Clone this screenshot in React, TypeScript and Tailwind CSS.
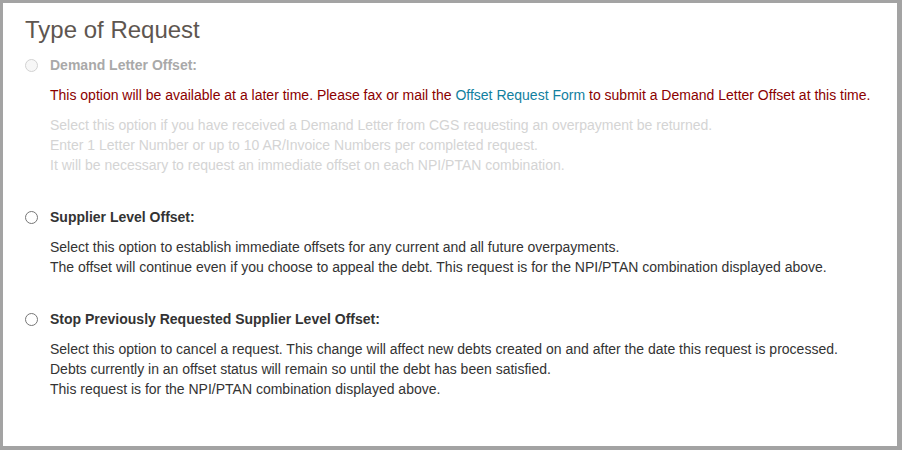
type Option = {
  id: string;
  label: string;
  disabled?: boolean;
  lines: string[];
};

const options: Option[] = [
  {
    id: "supplier",
    label: "Supplier Level Offset:",
    lines: [
      "Select this option to establish immediate offsets for any current and all future overpayments.",
      "The offset will continue even if you choose to appeal the debt. This request is for the NPI/PTAN combination displayed above.",
    ],
  },
  {
    id: "stop",
    label: "Stop Previously Requested Supplier Level Offset:",
    lines: [
      "Select this option to cancel a request. This change will affect new debts created on and after the date this request is processed.",
      "Debts currently in an offset status will remain so until the debt has been satisfied.",
      "This request is for the NPI/PTAN combination displayed above.",
    ],
  },
];

function Radio({ disabled }: { disabled?: boolean }) {
  return (
    <span
      className={`inline-block w-[13px] h-[13px] rounded-full border shrink-0 ${
        disabled ? "border-[#d2d2d2] bg-[#f7f7f7]" : "border-[#767676] bg-white"
      }`}
    />
  );
}

function OptionLabel({ label, disabled }: { label: string; disabled?: boolean }) {
  return (
    <label className="flex items-center gap-3 h-5">
      <Radio disabled={disabled} />
      <span className={`font-bold ${disabled ? "text-[#a9a9a9]" : "text-[#333333]"}`}>
        {label}
      </span>
    </label>
  );
}

export default function App() {
  return (
    <div
      className="w-[902px] h-[450px] bg-white border-[#a3a3a3] border-t-[3px] border-l-[3px] border-r-[5px] border-b-[4px] text-[14px] leading-5 text-[#333333]"
      style={{ fontFamily: '"Liberation Sans", Arial, sans-serif' }}
    >
      <div className="pl-[22px] pt-[13px]">
        <h1 className="text-[24px] leading-7 text-[#5e5650]">Type of Request</h1>

        <div className="mt-[11px]">
          <OptionLabel label="Demand Letter Offset:" disabled />
          <div className="pl-[25px]">
            <p className="mt-[10px] text-[#8b0000]">
              This option will be available at a later time. Please fax or mail the{" "}
              <a href="#" className="text-[#12809f]">
                Offset Request Form
              </a>{" "}
              to submit a Demand Letter Offset at this time.
            </p>
            <p className="mt-[10px] text-[#d4d4d4]">
              Select this option if you have received a Demand Letter from CGS requesting an overpayment be returned.
              <br />
              Enter 1 Letter Number or up to 10 AR/Invoice Numbers per completed request.
              <br />
              It will be necessary to request an immediate offset on each NPI/PTAN combination.
            </p>
          </div>
        </div>

        {options.map((opt) => (
          <div key={opt.id} className="mt-[32px]">
            <OptionLabel label={opt.label} />
            <p className="pl-[25px] mt-[10px]">
              {opt.lines.map((line, i) => (
                <span key={i}>
                  {line}
                  {i < opt.lines.length - 1 && <br />}
                </span>
              ))}
            </p>
          </div>
        ))}
      </div>
    </div>
  );
}
